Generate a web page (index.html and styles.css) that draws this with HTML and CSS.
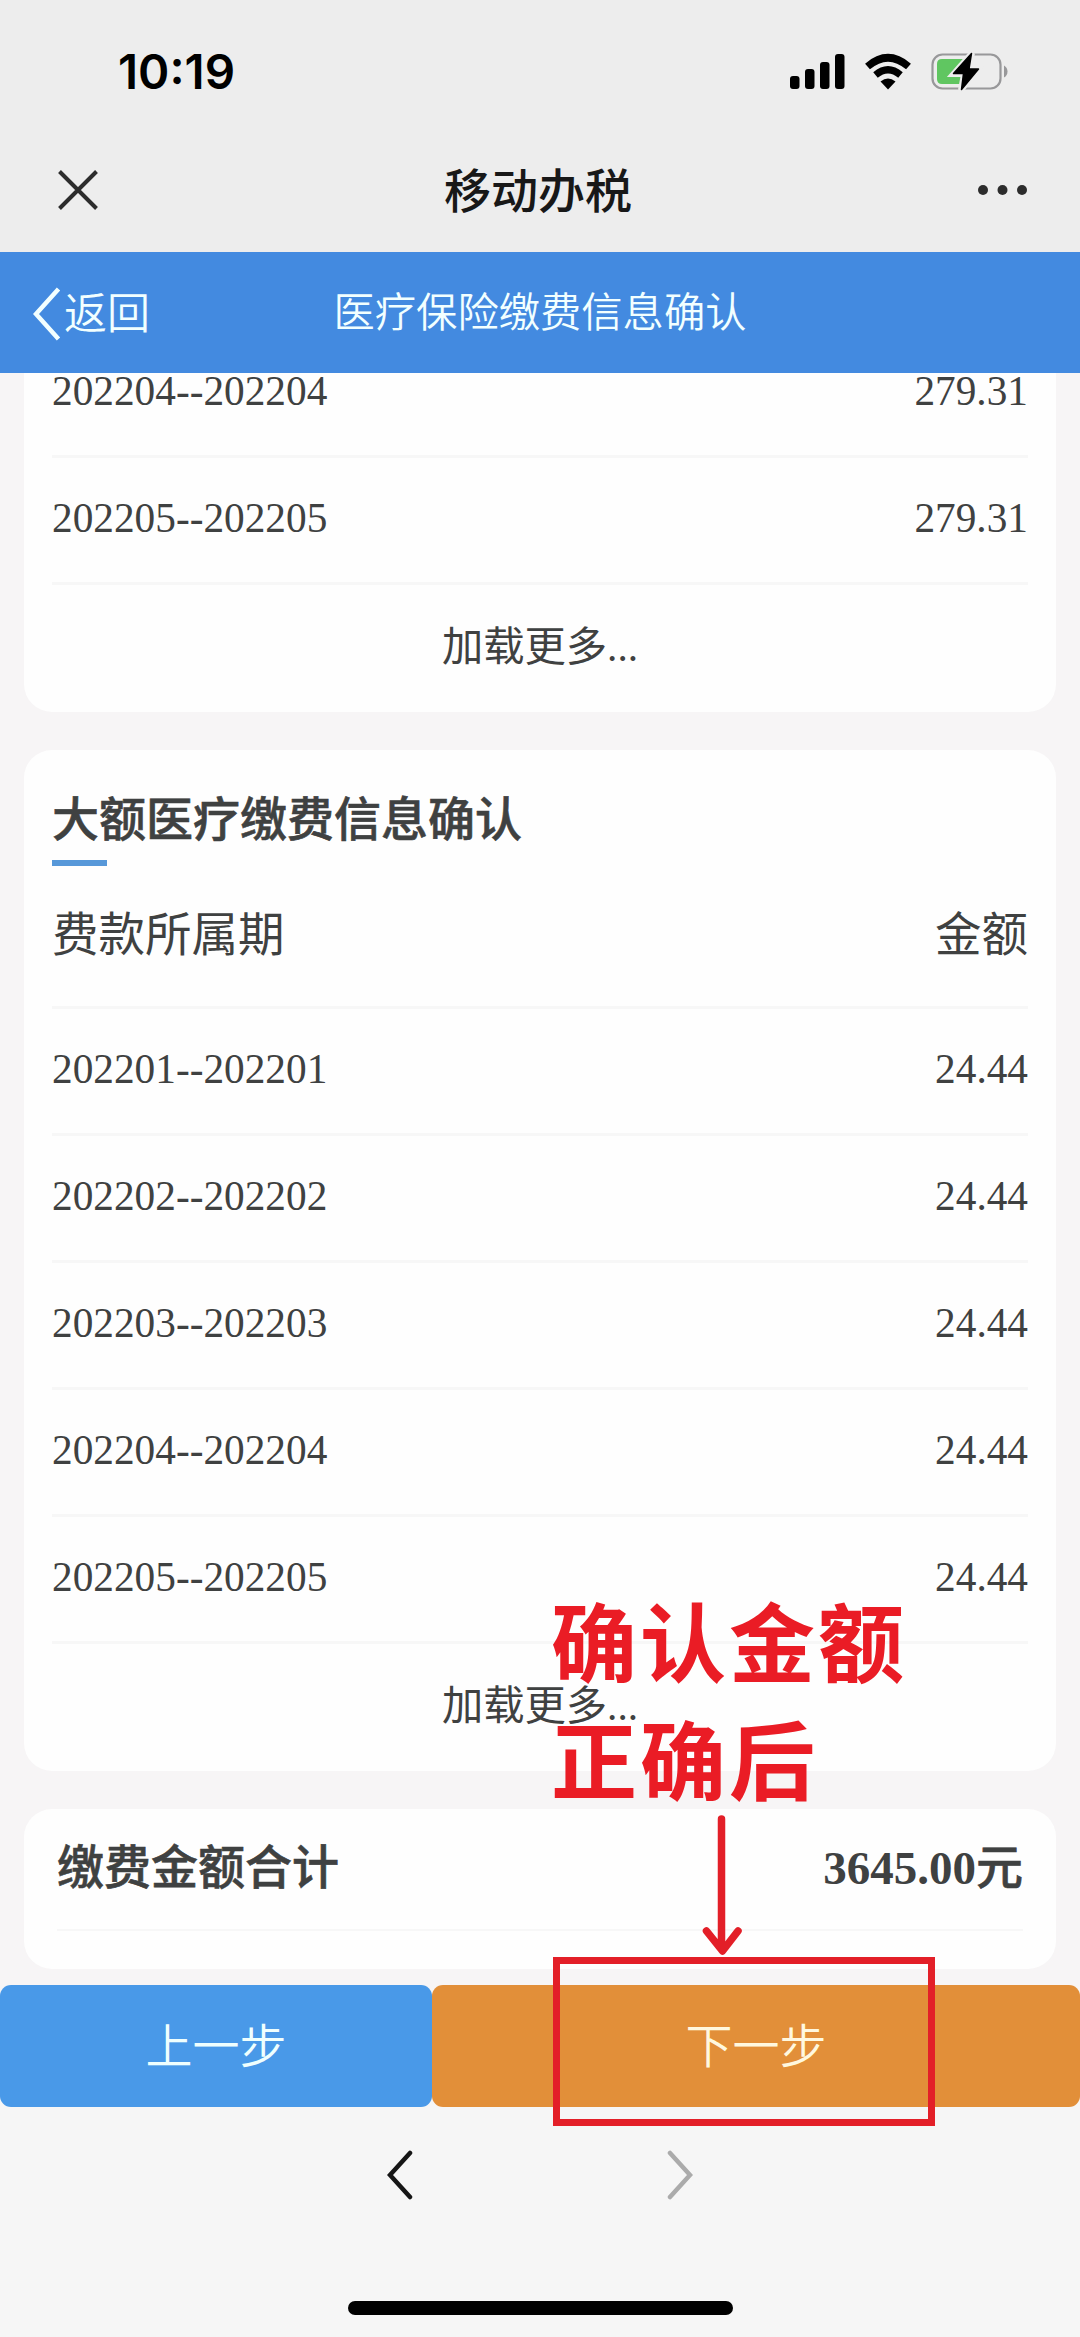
FILE: index.html
```html
<!DOCTYPE html>
<html lang="zh-CN">
<head>
    <meta charset="UTF-8">
    <meta name="viewport" content="width=device-width, initial-scale=1.0">
    <title>移动办税</title>
    <link rel="stylesheet" href="styles.css">
</head>
<body>
    <div class="phone">
        <div class="status-bar">
            <span class="time">10:19</span>
            <svg class="status-icons" width="220" height="40" viewBox="0 0 220 40">
                <!-- signal -->
                <rect x="0" y="24" width="9.5" height="13" rx="3"/>
                <rect x="15" y="17" width="9.5" height="20" rx="3"/>
                <rect x="30" y="10" width="9.5" height="27" rx="3"/>
                <rect x="45" y="2" width="9.5" height="35" rx="3"/>
                <!-- wifi -->
                <path d="M77.5 14.5Q98 -3 118.500 14.500" fill="none" stroke="#000" stroke-width="7.500"/>
                <path d="M85.500 23Q98 12.500 110.500 23" fill="none" stroke="#000" stroke-width="7"/>
                <path d="M90.500 29.500Q98 23.500 105.500 29.500L98 37.500Z"/>
                <!-- battery -->
                <rect x="142.500" y="2.500" width="68" height="34" rx="10" fill="none" stroke="#98989a" stroke-width="2.200"/>
                <path d="M214 13.500Q217.500 15.500 217.500 19.500Q217.500 23.500 214 25.500Z" fill="#98989a"/>
                <path d="M152 7H174V32H152Q147 32 147 27V12Q147 7 152 7Z" fill="#60c661"/>
                <path d="M182 1L163.500 22H174L171 38L188.500 16.500H178.500Z" stroke="#ededed" stroke-width="6" fill="#ededed"/>
                <path d="M181.500 1.500L163.500 21.500H173.500L171.500 37.500L188.500 17H179Z" stroke="#000" stroke-width="1.500" stroke-linejoin="round"/>
            </svg>
        </div>
        <div class="title-bar">
            <svg class="close" width="40" height="40" viewBox="0 0 40 40">
                <path d="M1.500 1.500L38.500 38.500M38.500 1.500L1.500 38.500"/>
            </svg>
            <h1>移动办税</h1>
            <svg class="more" width="50" height="10" viewBox="0 0 50 10">
                <circle cx="5" cy="5" r="5"/>
                <circle cx="24.500" cy="5" r="5"/>
                <circle cx="44" cy="5" r="5"/>
            </svg>
        </div>
        <header class="page-header">
            <a class="back" href="#">
                <svg width="28" height="54" viewBox="0 0 28 54">
                    <path d="M25.500 2L3 27L25.500 52"/>
                </svg>
                <span>返回</span>
            </a>
            <h2>医疗保险缴费信息确认</h2>
        </header>

        <main class="content">
            <section class="card card-first">
                <div class="row"><span>202204--202204</span><span>279.31</span></div>
                <div class="row"><span>202205--202205</span><span>279.31</span></div>
                <div class="load-more">加载更多...</div>
            </section>

            <section class="card">
                <h3 class="card-title">大额医疗缴费信息确认</h3>
                <div class="row row-head"><span>费款所属期</span><span>金额</span></div>
                <div class="row"><span>202201--202201</span><span>24.44</span></div>
                <div class="row"><span>202202--202202</span><span>24.44</span></div>
                <div class="row"><span>202203--202203</span><span>24.44</span></div>
                <div class="row"><span>202204--202204</span><span>24.44</span></div>
                <div class="row"><span>202205--202205</span><span>24.44</span></div>
                <div class="load-more">加载更多...</div>
            </section>

            <section class="card card-total">
                <div class="total"><span>缴费金额合计</span><span><b>3645.00</b>元</span></div>
            </section>
        </main>

        <div class="buttons">
            <button class="btn-prev">上一步</button>
            <button class="btn-next">下一步</button>
        </div>

        <nav class="browser-nav">
            <svg width="26" height="50" viewBox="0 0 26 50">
                <path d="M23 3L3 25L23 47" stroke="#161616"/>
            </svg>
            <svg width="26" height="50" viewBox="0 0 26 50">
                <path d="M3 3L23 25L3 47" stroke="#ababab"/>
            </svg>
        </nav>
        <div class="home-indicator"></div>

        <!-- red marks over the page -->
        <div class="note">确认金额<br>正确后</div>
        <svg class="note-arrow" width="42" height="142" viewBox="0 0 42 142">
            <path d="M21.500 5V134M6.500 117L22.500 137L38 117"/>
        </svg>
        <div class="note-box"></div>
    </div>
</body>
</html>
```
FILE: styles.css
```css
* {
    box-sizing: border-box;
}
body {
    margin: 0;
    font-family: "Liberation Serif", "Noto Sans CJK SC", sans-serif;
    color: #3f4141;
}
h1, h2, h3 {
    margin: 0;
}
.phone {
    position: relative;
    width: 1080px;
    height: 2337px;
    display: flex;
    flex-direction: column;
    overflow: hidden;
    background-color: #f7f5f6;
}
.status-bar {
    height: 132px;
    padding: 0 70px 0 118px;
    display: flex;
    justify-content: space-between;
    align-items: flex-start;
    background-color: #ededed;
}
.time {
    margin-top: 42px;
    font-family: Inter, sans-serif;
    font-size: 47.5px;
    line-height: 60px;
    font-weight: 600;
    color: #000;
}
.status-icons {
    margin-top: 52px;
}
.title-bar {
    height: 120px;
    padding: 0 52px 4px 58px;
    display: flex;
    justify-content: space-between;
    align-items: center;
    background-color: #ededed;
}
.title-bar h1 {
    padding-top: 3px;
    font-size: 47px;
    line-height: 60px;
    font-weight: 500;
    color: #181818;
}
.close {
    fill: none;
    stroke: #2c2c2c;
    stroke-width: 4;
}
.more {
    fill: #2c2c2c;
}
.page-header {
    height: 121px;
    flex-shrink: 0;
    display: grid;
    grid-template-columns: 1fr auto 1fr;
    align-items: center;
    background-color: #438ae0;
    color: #f2ffff;
}
.page-header h2 {
    font-size: 41.3px;
    line-height: 60px;
    font-weight: 350;
}
.back {
    display: flex;
    align-items: center;
    padding: 3px 0 0 33px;
    text-decoration: none;
    color: #f2ffff;
    font-size: 43px;
    line-height: 60px;
    font-weight: 350;
}
.back span {
    margin-left: 3px;
    padding-top: 1px;
}
.back path {
    fill: none;
    stroke: #f2ffff;
    stroke-width: 4.5;
}
.content {
    height: 1612px;
    padding: 0 24px;
    overflow: hidden;
}
.card {
    margin-bottom: 38px;
    padding: 0 28px;
    background-color: #fefefe;
    border-radius: 28px;
}
.card-first {
    margin-top: -42px;
}
.row {
    height: 127px;
    padding-bottom: 4px;
    display: flex;
    justify-content: space-between;
    align-items: center;
    border-bottom: 3px solid #f7f7f7;
    font-size: 41.3px;
}
.row-head {
    height: 143px;
    padding-bottom: 11px;
    font-size: 46.5px;
}
.load-more {
    height: 127px;
    line-height: 125px;
    font-size: 41.3px;
    text-align: center;
}
.card-title {
    height: 116px;
    padding-top: 40px;
    font-size: 47px;
    line-height: 60px;
    font-weight: 500;
    -webkit-text-stroke: 0.6px #3f4141;
}
.card-title::after {
    content: "";
    display: block;
    width: 55px;
    height: 6px;
    margin-top: 10px;
    background-color: #5798d9;
}
.card-total {
    height: 160px;
    padding: 0 33px;
}
.total {
    height: 122px;
    padding-bottom: 11px;
    display: flex;
    justify-content: space-between;
    align-items: center;
    border-bottom: 2px solid #f7f7f7;
    font-size: 47px;
    font-weight: 500;
    -webkit-text-stroke: 0.6px #3f4141;
}
.total b {
    -webkit-text-stroke: 0;
}
.buttons {
    display: flex;
    height: 122px;
    flex-shrink: 0;
    background: linear-gradient(#f7f5f6 50%, #f6f6f6 50%);
}
.buttons button {
    border: none;
    border-radius: 11px;
    padding: 0 0 7px;
    font-family: inherit;
    font-size: 47px;
    font-weight: 350;
}
.btn-prev {
    width: 432px;
    background-color: #4999e8;
    color: #effffe;
}
.btn-next {
    width: 648px;
    background-color: #e28f39;
    color: #fff8df;
}
.browser-nav {
    flex: 1;
    padding-top: 43px;
    display: flex;
    justify-content: center;
    gap: 254px;
    background-color: #f6f6f6;
}
.browser-nav path {
    fill: none;
    stroke-width: 4.5;
    stroke-linecap: round;
}
.home-indicator {
    height: 36px;
    flex-shrink: 0;
    background-color: #f6f6f6;
}
.home-indicator::before {
    content: "";
    display: block;
    width: 385px;
    height: 14px;
    margin: 0 auto;
    border-radius: 7px;
    background-color: #000;
}
.note {
    position: absolute;
    left: 551px;
    top: 1588px;
    font-size: 86px;
    line-height: 118px;
    letter-spacing: 3px;
    font-weight: 700;
    color: #ea1c25;
}
.note-arrow {
    position: absolute;
    left: 700px;
    top: 1814px;
    fill: none;
    stroke: #e31f28;
    stroke-width: 7.5;
    stroke-linecap: round;
    stroke-linejoin: round;
}
.note-box {
    position: absolute;
    left: 553px;
    top: 1957px;
    width: 382px;
    height: 169px;
    border: 7px solid #e31f28;
}
```
